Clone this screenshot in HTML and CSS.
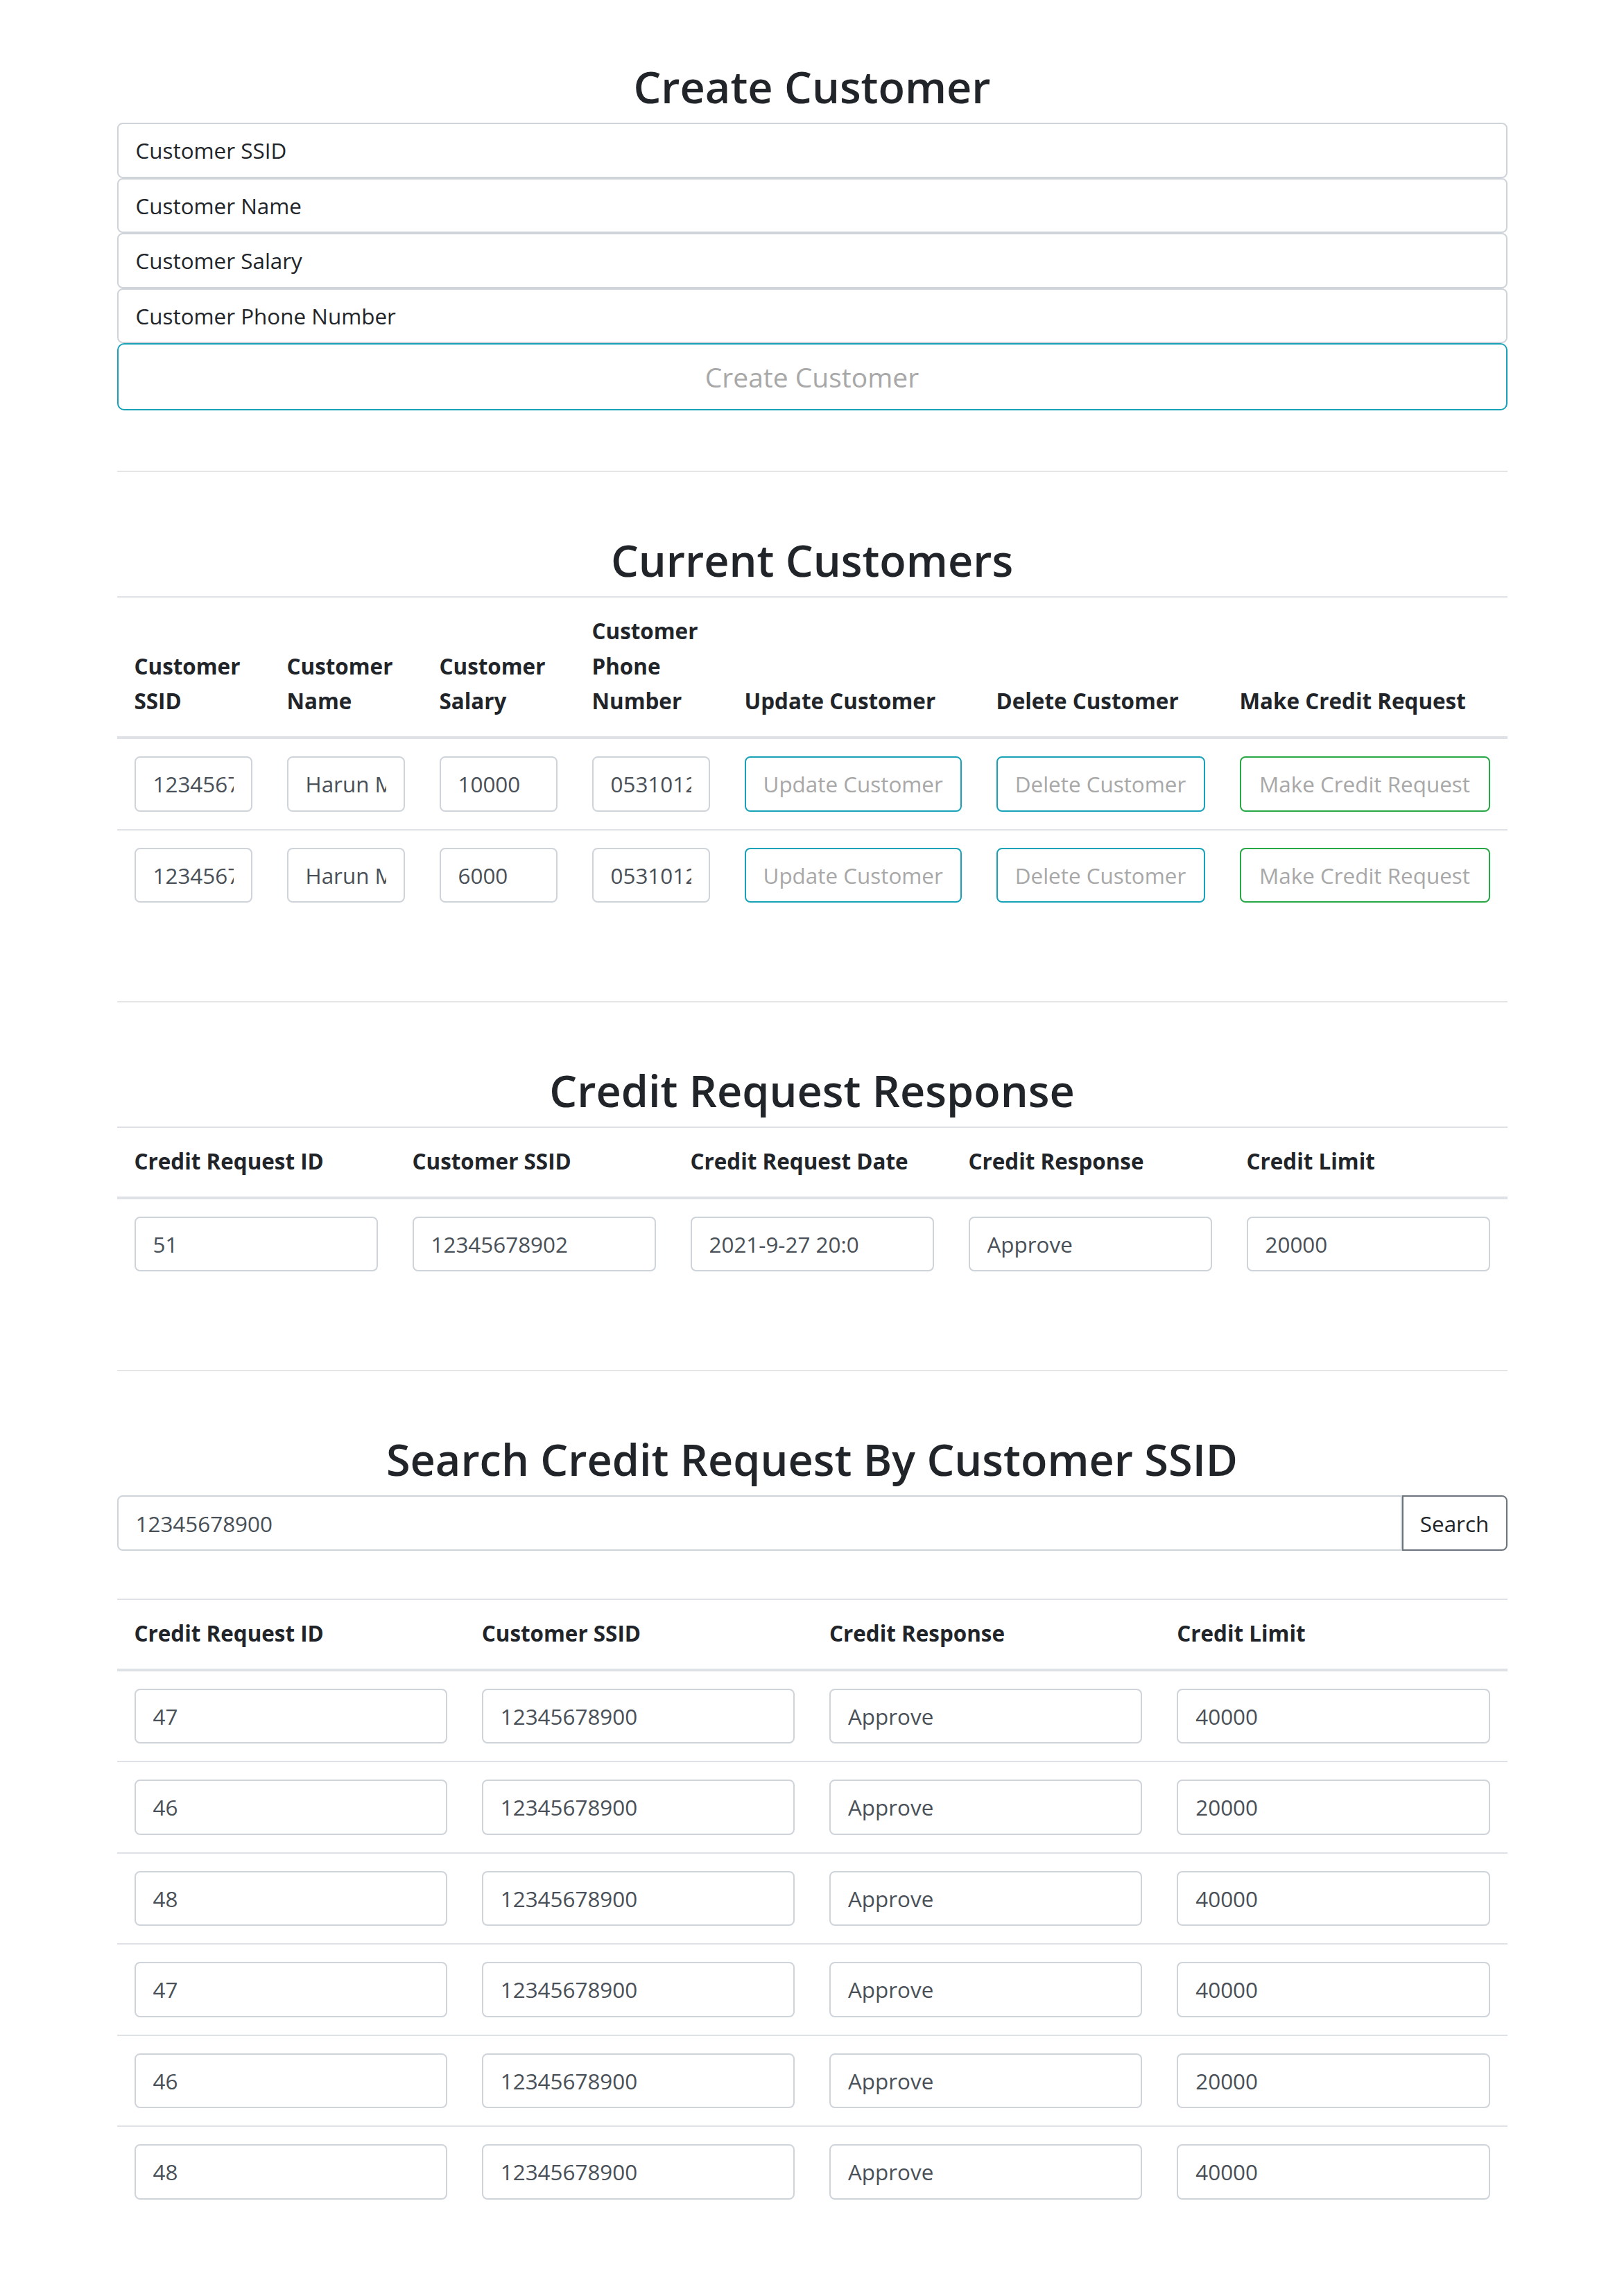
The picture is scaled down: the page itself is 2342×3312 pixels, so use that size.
FILE: index.html
```html
<!DOCTYPE html>
<html lang="en">
<head>
    <meta charset="UTF-8">
    <meta name="viewport" content="width=device-width, initial-scale=1.0">
    <title>Customers</title>
    <link rel="stylesheet" href="styles.css">
</head>
<body>
<div class="container">

    <h2 class="title">Create Customer</h2>
    <div class="create-form">
        <input class="field" type="text" placeholder="Customer SSID">
        <input class="field" type="text" placeholder="Customer Name">
        <input class="field" type="text" placeholder="Customer Salary">
        <input class="field" type="text" placeholder="Customer Phone Number">
        <button class="btn-create">Create Customer</button>
    </div>

    <hr class="divider">

    <h2 class="title">Current Customers</h2>
    <table class="grid customers">
        <colgroup>
            <col class="c-small"><col class="c-small"><col class="c-small"><col class="c-small">
            <col class="c-update"><col class="c-delete"><col class="c-credit">
        </colgroup>
        <thead>
            <tr>
                <th>Customer SSID</th>
                <th>Customer Name</th>
                <th>Customer Salary</th>
                <th>Customer Phone Number</th>
                <th>Update Customer</th>
                <th>Delete Customer</th>
                <th>Make Credit Request</th>
            </tr>
        </thead>
        <tbody>
            <tr>
                <td><input class="field" type="text" value="12345678902"></td>
                <td><input class="field" type="text" value="Harun Mutlu"></td>
                <td><input class="field" type="text" value="10000"></td>
                <td><input class="field" type="text" value="05310123456"></td>
                <td><button class="btn-line info">Update Customer</button></td>
                <td><button class="btn-line info">Delete Customer</button></td>
                <td><button class="btn-line success">Make Credit Request</button></td>
            </tr>
            <tr>
                <td><input class="field" type="text" value="12345678900"></td>
                <td><input class="field" type="text" value="Harun Mutlu"></td>
                <td><input class="field" type="text" value="6000"></td>
                <td><input class="field" type="text" value="05310123457"></td>
                <td><button class="btn-line info">Update Customer</button></td>
                <td><button class="btn-line info">Delete Customer</button></td>
                <td><button class="btn-line success">Make Credit Request</button></td>
            </tr>
        </tbody>
    </table>

    <hr class="divider">

    <h2 class="title">Credit Request Response</h2>
    <table class="grid">
        <thead>
            <tr>
                <th>Credit Request ID</th>
                <th>Customer SSID</th>
                <th>Credit Request Date</th>
                <th>Credit Response</th>
                <th>Credit Limit</th>
            </tr>
        </thead>
        <tbody>
            <tr>
                <td><input class="field" type="text" value="51"></td>
                <td><input class="field" type="text" value="12345678902"></td>
                <td><input class="field" type="text" value="2021-9-27 20:0"></td>
                <td><input class="field" type="text" value="Approve"></td>
                <td><input class="field" type="text" value="20000"></td>
            </tr>
        </tbody>
    </table>

    <hr class="divider">

    <h2 class="title">Search Credit Request By Customer SSID</h2>
    <div class="search">
        <input class="field" type="text" value="12345678900">
        <button class="btn-search">Search</button>
    </div>

    <table class="grid">
        <thead>
            <tr>
                <th>Credit Request ID</th>
                <th>Customer SSID</th>
                <th>Credit Response</th>
                <th>Credit Limit</th>
            </tr>
        </thead>
        <tbody>
            <tr>
                <td><input class="field" type="text" value="47"></td>
                <td><input class="field" type="text" value="12345678900"></td>
                <td><input class="field" type="text" value="Approve"></td>
                <td><input class="field" type="text" value="40000"></td>
            </tr>
            <tr>
                <td><input class="field" type="text" value="46"></td>
                <td><input class="field" type="text" value="12345678900"></td>
                <td><input class="field" type="text" value="Approve"></td>
                <td><input class="field" type="text" value="20000"></td>
            </tr>
            <tr>
                <td><input class="field" type="text" value="48"></td>
                <td><input class="field" type="text" value="12345678900"></td>
                <td><input class="field" type="text" value="Approve"></td>
                <td><input class="field" type="text" value="40000"></td>
            </tr>
            <tr>
                <td><input class="field" type="text" value="47"></td>
                <td><input class="field" type="text" value="12345678900"></td>
                <td><input class="field" type="text" value="Approve"></td>
                <td><input class="field" type="text" value="40000"></td>
            </tr>
            <tr>
                <td><input class="field" type="text" value="46"></td>
                <td><input class="field" type="text" value="12345678900"></td>
                <td><input class="field" type="text" value="Approve"></td>
                <td><input class="field" type="text" value="20000"></td>
            </tr>
            <tr>
                <td><input class="field" type="text" value="48"></td>
                <td><input class="field" type="text" value="12345678900"></td>
                <td><input class="field" type="text" value="Approve"></td>
                <td><input class="field" type="text" value="40000"></td>
            </tr>
        </tbody>
    </table>

</div>
</body>
</html>
```

FILE: styles.css
```css
body{
    margin: 0;
    background-color: white;
    font-family: "Open Sans", "Liberation Sans", sans-serif;
    font-size: 31.4px;
    line-height: 50.7px;
    color: #212529;
}
.container{
    width: 2005px;
    margin: 0 auto;
    padding-top: 84px;
    padding-bottom: 20px;
}

.title{
    margin: 0 0 12px 0;
    font-size: 63px;
    font-weight: 600;
    line-height: 81px;
    text-align: center;
}

.field{
    display: block;
    width: 100%;
    height: 79.5px;
    box-sizing: border-box;
    margin: 0;
    padding: 0 25px;
    border: 2px solid #ced4da;
    border-radius: 8px;
    background-color: white;
    font-family: inherit;
    font-size: 31.4px;
    color: #495057;
}
.create-form .field::placeholder{
    color: #212529;
    opacity: 1;
}

.btn-create{
    display: block;
    width: 100%;
    height: 97px;
    margin: 0;
    border: 2px solid #17a2b8;
    border-radius: 10px;
    background-color: white;
    font-family: inherit;
    font-size: 39px;
    color: #a8a8a8;
}

.divider{
    height: 0;
    margin: 87px 0 86px 0;
    border: 0;
    border-top: 2px solid #e5e5e5;
}

.grid{
    width: 100%;
    border-collapse: collapse;
    table-layout: fixed;
    margin-bottom: 117px;
}
.grid th,
.grid td{
    padding: 25px;
    border-top: 2px solid #dee2e6;
    text-align: left;
}
.grid th{
    padding-top: 23px;
    vertical-align: bottom;
    border-bottom: 4px solid #dee2e6;
    font-weight: bold;
}
.grid td{
    vertical-align: top;
}

.c-small{ width: 220px; }
.c-update{ width: 363px; }
.c-delete{ width: 351px; }
.c-credit{ width: 411px; }

.btn-line{
    display: block;
    width: 100%;
    height: 79.5px;
    box-sizing: border-box;
    padding: 0 25px;
    border: 2px solid #17a2b8;
    border-radius: 8px;
    background-color: white;
    font-family: inherit;
    font-size: 31.4px;
    color: #a8a8a8;
    white-space: nowrap;
    overflow: hidden;
}
.btn-line.success{
    border-color: #28a745;
}

.search{
    display: flex;
    margin-bottom: 69px;
}
.search .field{
    flex: 1;
    border-radius: 8px 0 0 8px;
}
.btn-search{
    width: 152px;
    height: 79.5px;
    flex: none;
    border: 2px solid #6c757d;
    border-radius: 0 8px 8px 0;
    background-color: white;
    font-family: inherit;
    font-size: 31.4px;
    color: #212529;
}
```
